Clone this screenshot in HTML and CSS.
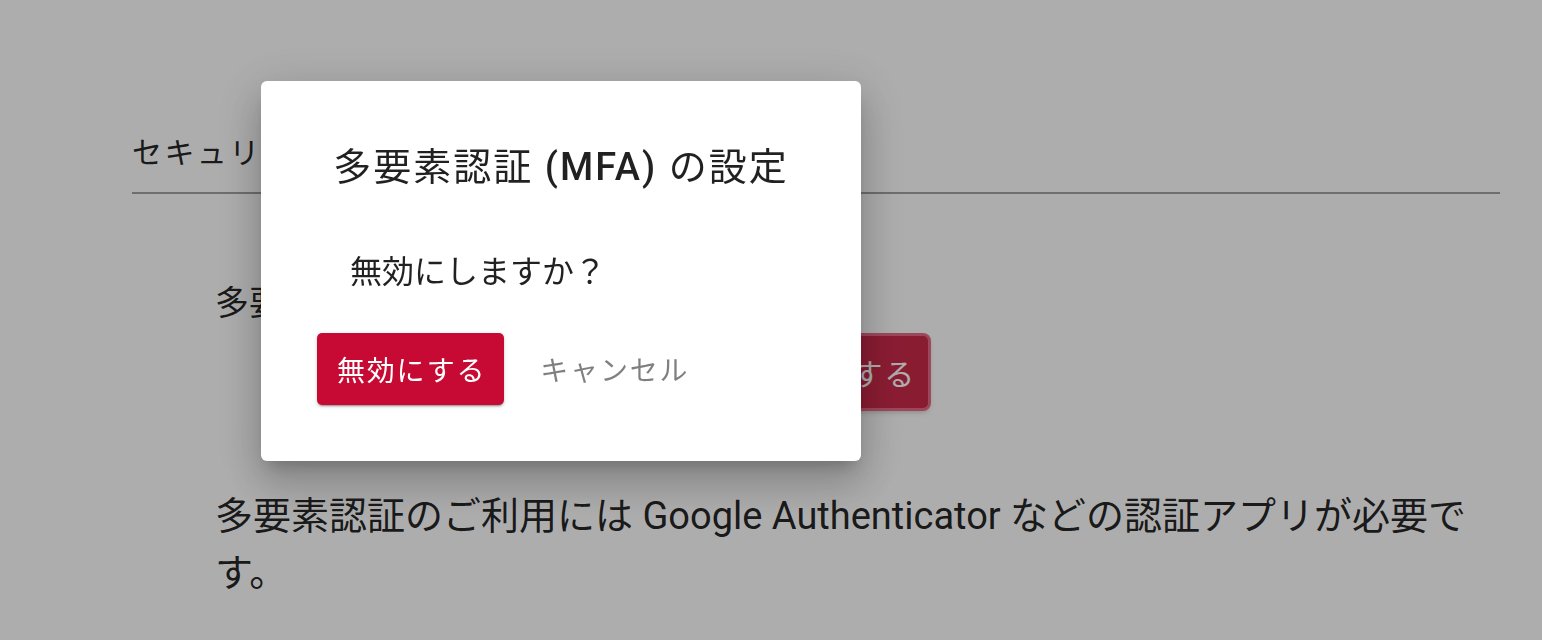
FILE: index.html
```html
<!DOCTYPE html>
<html lang="ja">
<head>
    <meta charset="UTF-8">
    <title>セキュリティ</title>
    <link rel="stylesheet" href="styles.css">
</head>
<body>

<div class="settings">
    <h2 class="section-title">セキュリティ</h2>

    <div class="mfa">
        <p class="mfa-label">多要素認証 (MFA)：有効</p>
        <div class="mfa-actions">
            <button class="btn btn-danger btn-focus">無効にする</button>
        </div>
        <p class="mfa-note">多要素認証のご利用には Google Authenticator などの認証アプリが必要です。</p>
    </div>
</div>

<!-- ダイアログ -->
<div class="backdrop">
    <div class="dialog">
        <h1 class="dialog-title">多要素認証 <span class="latin">(MFA)</span> の設定</h1>
        <p class="dialog-content">無効にしますか？</p>
        <div class="dialog-actions">
            <button class="btn btn-danger btn-raised">無効にする</button>
            <button class="btn btn-text">キャンセル</button>
        </div>
    </div>
</div>

</body>
</html>
```

FILE: styles.css
```css
*{
    margin: 0;
    padding: 0;
    box-sizing: border-box;
}

body{
    font-family: Roboto, "Noto Sans CJK JP", sans-serif;
    color: rgba(0, 0, 0, .87);
    background-color: #fff;
}

.settings{
    margin: 0 42px 0 132px;
    padding-top: 130px;
}

.section-title{
    font-size: 30px;
    font-weight: 400;
    line-height: 46px;
    letter-spacing: 2.4px;
    padding-bottom: 16px;
    border-bottom: 2px solid #a2a2a2;
}

.mfa{
    padding-left: 83px;
}

.mfa-label{
    margin-top: 84px;
    font-size: 34px;
    line-height: 50px;
}

.mfa-actions{
    margin-top: 8px;
    padding-left: 523px;
}

.mfa-note{
    margin-top: 80px;
    font-size: 38px;
    line-height: 57px;
}

/* ボタン */
.btn{
    font-family: Roboto, "Noto Sans CJK JP", sans-serif;
    font-size: 28px;
    letter-spacing: 1.8px;
    height: 72px;
    padding: 0 18px 0 20px;
    border: none;
    border-radius: 5px;
    background: none;
    cursor: pointer;
}

.btn-danger{
    background-color: #c70a33;
    color: #fff;
}

.btn-raised{
    box-shadow: 0 3px 1px -2px rgba(0,0,0,.2), 0 2px 2px 0 rgba(0,0,0,.14), 0 1px 5px 0 rgba(0,0,0,.12);
}

/* 背面のボタン（フォーカス中） */
.btn-focus{
    width: 190px;
    font-size: 30px;
    padding: 0 12px 0 0;
    text-align: right;
    background-color: #cc2a4b;
    box-shadow: 0 0 0 3px #e86a85, 0 3px 6px rgba(0,0,0,.3);
}

.btn-text{
    color: rgba(0, 0, 0, .5);
    margin-left: 16px;
}

/* ダイアログ */
.backdrop{
    position: fixed;
    top: 0;
    right: 0;
    bottom: 0;
    left: 0;
    background-color: rgba(0, 0, 0, .32);
}

.dialog{
    position: absolute;
    left: 261px;
    top: 81px;
    width: 600px;
    height: 380px;
    padding: 56px;
    background-color: #fff;
    border-radius: 6px;
    box-shadow: 0 11px 15px -7px rgba(0,0,0,.2), 0 24px 38px 3px rgba(0,0,0,.14), 0 9px 46px 8px rgba(0,0,0,.12);
}

.dialog-title{
    font-size: 38px;
    font-weight: 400;
    line-height: 60px;
    letter-spacing: 2px;
    text-align: center;
    white-space: nowrap;
}

.dialog-title .latin{
    font-weight: 500;
}

.dialog-content{
    margin-top: 53px;
    padding-left: 33px;
    font-size: 32px;
    line-height: 44px;
}

.dialog-actions{
    margin-top: 39px;
    display: flex;
}
```
